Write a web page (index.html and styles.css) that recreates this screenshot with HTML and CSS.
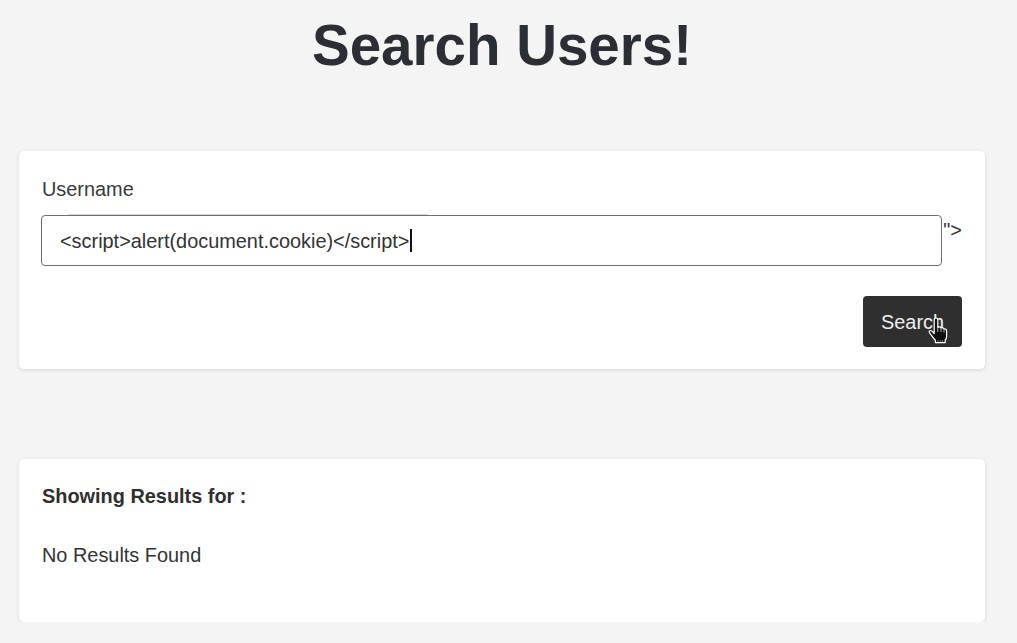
FILE: index.html
```html
<!DOCTYPE html>
<html lang="en">
<head>
<meta charset="utf-8">
<title>Search Users!</title>
<link rel="stylesheet" href="styles.css">
</head>
<body>
<div class="page">
  <h1 class="title">Search Users!</h1>

  <form class="card search-card">
    <label class="label">Username</label>
    <div class="field-row">
      <div class="input-box">
        <span class="input-text">&lt;script&gt;alert(document.cookie)&lt;/script&gt;</span><span class="caret"></span>
      </div>
      <span class="leak">"&gt;</span>
    </div>
    <div class="actions">
      <div class="btn-wrap">
        <button type="button" class="btn">Search</button>
        <svg class="hand" width="20" height="27" viewBox="0 0 20 27">
          <path d="M6.2 3 Q6.2 1 8 1 Q9.8 1 9.8 3 V10.4 Q11.9 9.2 13 10.9 Q15 10.1 16 11.9 Q18.6 11.6 18.6 14 V19.5 Q18.6 21.8 17.2 23 V25.6 H7.4 V23.2 Q5.6 21.6 4.2 19.4 L1.4 15.6 Q0.6 13.9 2.4 13.5 Q3.8 13.5 6.2 16.6 Z" fill="#111" stroke="#fff" stroke-width="1.2" stroke-linejoin="round"/>
          <path d="M9.8 10.4 V15 M13 10.9 V15 M16 11.9 V15.4" stroke="#ddd" stroke-width="0.8" fill="none"/>
          <path d="M10 23 V25 M12.3 23 V25 M14.6 23 V25" stroke="#888" stroke-width="0.8"/>
        </svg>
      </div>
    </div>
  </form>

  <section class="card results-card">
    <p class="results-title">Showing Results for :</p>
    <p class="results-text">No Results Found</p>
  </section>
</div>
</body>
</html>
```

FILE: styles.css
```css
* {
  box-sizing: border-box;
}

html, body {
  margin: 0;
  padding: 0;
  background: #f4f4f4;
}

body {
  font-family: "Liberation Sans", Arial, sans-serif;
  color: #333;
  font-size: 19.9px;
  line-height: 24px;
}

.page {
  padding: 14px 32px 0 19px;
}

.title {
  margin: 0;
  font-size: 56.5px;
  line-height: 64px;
  font-weight: 700;
  text-align: center;
  color: #2b2e35;
}

.card {
  background: #fff;
  border-radius: 5px;
  box-shadow: 0 1px 4px rgba(0, 0, 0, 0.12);
}

.search-card {
  margin-top: 73px;
  padding: 26px 23px 22px 23px;
}

.label {
  display: block;
  line-height: 24px;
  color: #3a3a3a;
}

.field-row {
  display: flex;
  align-items: flex-start;
  margin-top: 14px;
  margin-left: -1px;
}

.input-box {
  position: relative;
  width: 903px;
  height: 51px;
  border: 1px solid #6f6f6f;
  border-radius: 4px;
  padding-left: 18px;
  display: flex;
  align-items: center;
  color: #333;
}

.input-box::before {
  content: "";
  position: absolute;
  top: -2px;
  left: 26px;
  width: 360px;
  height: 1px;
  background: #d4d4d4;
}

.caret {
  display: inline-block;
  width: 2px;
  height: 23px;
  margin-left: 1px;
  background: #111;
}

.leak {
  margin-top: 3px;
  margin-left: 1px;
  color: #333;
}

.actions {
  display: flex;
  justify-content: flex-end;
  margin-top: 30px;
}

.btn-wrap {
  position: relative;
}

.btn {
  display: block;
  width: 99px;
  height: 51px;
  padding: 0;
  border: none;
  border-radius: 4px;
  background: #2f2f2f;
  color: #eee;
  font-family: "Liberation Sans", Arial, sans-serif;
  font-size: 19.9px;
  line-height: 24px;
}

.hand {
  position: absolute;
  left: 65px;
  top: 21px;
}

.results-card {
  margin-top: 90px;
  padding: 25px 23px 55px 23px;
}

.results-title {
  margin: 0;
  font-weight: 700;
  color: #2f2f2f;
}

.results-text {
  margin: 35px 0 0;
  color: #333;
}
```
